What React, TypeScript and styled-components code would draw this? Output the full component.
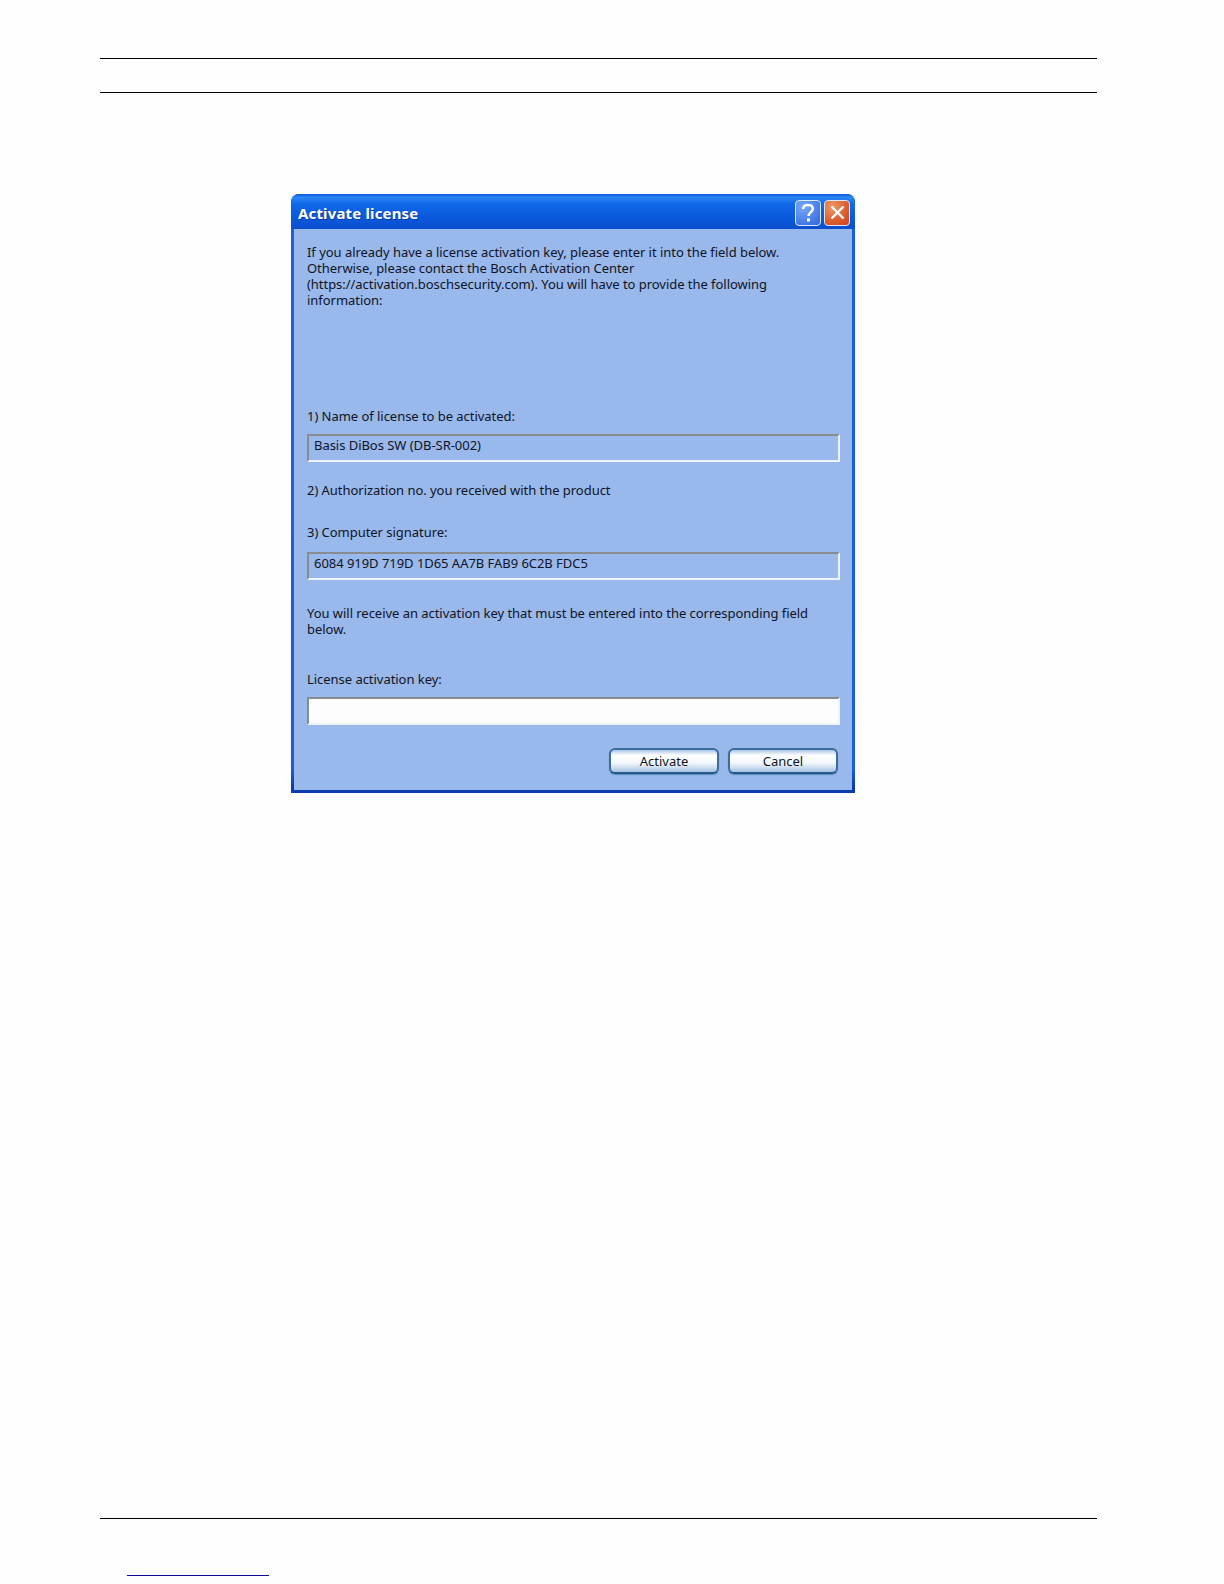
import React from "react";
import styled, { createGlobalStyle } from "styled-components";

const Global = createGlobalStyle`
  html, body { margin: 0; padding: 0; background: #fff; }
  body { font-family: "Noto Sans", "Liberation Sans", sans-serif; }
`;

const Page = styled.div`
  width: 1224px;
  height: 1584px;
  display: flex;
  flex-direction: column;
  overflow: hidden;
  background: #fefefe;
`;

const Rule = styled.div<{ $top: number; $left: number; $width: number; $color?: string; $h?: number }>`
  margin-top: ${(p) => p.$top}px;
  margin-left: ${(p) => p.$left}px;
  width: ${(p) => p.$width}px;
  height: ${(p) => p.$h ?? 1}px;
  flex: none;
  background: ${(p) => p.$color ?? "#000"};
`;

const Dialog = styled.section`
  flex: none;
  box-sizing: border-box;
  margin: 101px 0 0 291px;
  width: 564px;
  height: 599px;
  display: flex;
  flex-direction: column;
  background: linear-gradient(180deg, #1a62dc 0%, #1a5ed8 96%, #0a3cb0 99%);
  border-radius: 8px 8px 0 0;
  padding: 0 3px 3px;
`;

const TitleBar = styled.header`
  flex: none;
  height: 35px;
  box-sizing: border-box;
  margin: 0 -3px;
  padding: 2px 5px 0 7px;
  display: flex;
  align-items: center;
  gap: 3px;
  border-radius: 8px 8px 0 0;
  background: linear-gradient(180deg, #0a5ade 0%, #2a86f4 10%, #1068e8 28%, #0a58dc 70%, #0a4ecc 100%);
`;

const Title = styled.h1`
  flex: 1;
  margin: 0;
  font-family: "Noto Sans", sans-serif;
  font-size: 15px;
  font-weight: 700;
  letter-spacing: 0.15px;
  color: #fff;
  text-shadow: 1px 1px 0 #0a3a9a;
`;

const WinButton = styled.div<{ $close?: boolean }>`
  width: 26px;
  height: 26px;
  box-sizing: border-box;
  display: flex;
  align-items: center;
  justify-content: center;
  border: 1px solid #dfe8fa;
  border-radius: 4px;
  background: ${(p) =>
    p.$close
      ? "radial-gradient(circle at 30% 25%, #ee9a68, #dc5c2c 60%, #c8441c)"
      : "radial-gradient(circle at 30% 25%, #78a8f4, #4a80e8 60%, #2f66d8)"};
`;

const Body = styled.div`
  flex: 1;
  min-height: 0;
  box-sizing: border-box;
  padding: 15px 12px 0 13px;
  background: #99b8eb;
  color: #10141e;
  font-size: 13px;
  line-height: 16px;
  letter-spacing: -0.04px;
  display: flex;
  flex-direction: column;
`;

const Para = styled.p<{ $top?: number }>`
  margin: ${(p) => p.$top ?? 0}px 0 0;
`;

const Field = styled.div<{ $top?: number; $empty?: boolean }>`
  box-sizing: border-box;
  margin-top: ${(p) => p.$top ?? 0}px;
  height: 28px;
  padding: 0 5px;
  line-height: 19px;
  border: 2px solid #eef3fa;
  border-top-color: #868c90;
  border-left-color: #868c90;
  background: ${(p) => (p.$empty ? "#fdfdfd" : "#99b8eb")};
`;

const Actions = styled.div`
  display: flex;
  justify-content: flex-end;
  gap: 9px;
  margin: 23px 2px 0 0;
`;

const Button = styled.button`
  box-sizing: border-box;
  width: 110px;
  height: 26px;
  padding: 0;
  font: inherit;
  color: #10141e;
  border: 2px solid #3a6c9c;
  border-bottom-color: #24588c;
  border-radius: 6px;
  background: linear-gradient(180deg, #a9c6e8 0%, #ffffff 24%, #f4f8fc 58%, #a8c4e4 100%);
  box-shadow: 0 1px 1px #5a88b8;
`;

export default function App() {
  return (
    <Page>
      <Global />
      <Rule $top={58} $left={100} $width={997} />
      <Rule $top={33} $left={100} $width={997} />
      <Dialog>
        <TitleBar>
          <Title>Activate license</Title>
          <WinButton>
            <svg width="14" height="20" viewBox="0 0 14 20" fill="none">
              <path d="M2.2 6C2.2 3.3 4.2 2 7 2s4.8 1.5 4.8 3.8c0 3.4-4.2 3.4-4.2 7.2" stroke="#fff" strokeWidth="2.4" />
              <rect x="6" y="15.4" width="3" height="3" fill="#fff" />
            </svg>
          </WinButton>
          <WinButton $close>
            <svg width="17" height="17" viewBox="0 0 17 17" fill="none">
              <path d="M2.5 2.5l12 12M14.5 2.5l-12 12" stroke="#fff" strokeWidth="2.4" />
            </svg>
          </WinButton>
        </TitleBar>
        <Body>
          <Para>
            If you already have a license activation key, please enter it into the field below.
            <br />
            Otherwise, please contact the Bosch Activation Center
            <br />
            (https://activation.boschsecurity.com). You will have to provide the following
            <br />
            information:
          </Para>
          <Para $top={100}>1) Name of license to be activated:</Para>
          <Field $top={10}>Basis DiBos SW (DB-SR-002)</Field>
          <Para $top={20}>2) Authorization no. you received with the product</Para>
          <Para $top={26}>3) Computer signature:</Para>
          <Field $top={12}>6084 919D 719D 1D65 AA7B FAB9 6C2B FDC5</Field>
          <Para $top={25}>
            You will receive an activation key that must be entered into the corresponding field
            <br />
            below.
          </Para>
          <Para $top={34}>License activation key:</Para>
          <Field $top={10} $empty />
          <Actions>
            <Button>Activate</Button>
            <Button>Cancel</Button>
          </Actions>
        </Body>
      </Dialog>
      <Rule $top={725} $left={100} $width={997} />
      <Rule $top={56} $left={127} $width={142} $color="#0c0c96" />
    </Page>
  );
}
